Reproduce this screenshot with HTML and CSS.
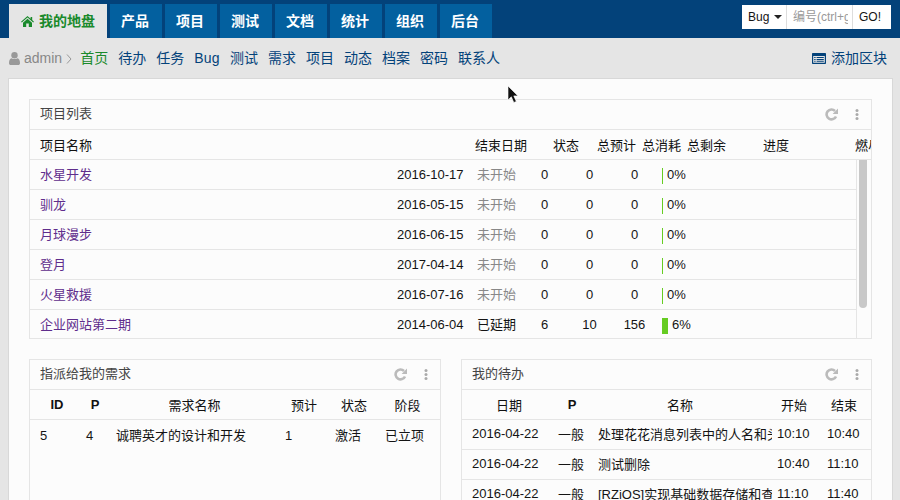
FILE: index.html
```html
<!DOCTYPE html>
<html lang="zh-CN">
	<head>
		<meta charset="utf-8">
		<title>我的地盘</title>
		<link rel="stylesheet" href="styles.css">
	</head>
	<body>

		<!-- top navigation -->
		<header class="topbar">
			<nav class="tabs">
				<a class="tab active">
					<svg class="home-icon" viewBox="0 0 13 11"><path d="M6.5 0 L9.6 2.7 V1 H11.2 V4.1 L13 5.7 L12.2 6.5 L6.5 1.6 L.8 6.5 L0 5.7 Z M2 6.7 L6.5 2.8 L11 6.7 V11 H7.8 V7.6 H5.2 V11 H2 Z"/></svg>
					我的地盘
				</a>
				<a class="tab">产品</a>
				<a class="tab">项目</a>
				<a class="tab">测试</a>
				<a class="tab">文档</a>
				<a class="tab">统计</a>
				<a class="tab">组织</a>
				<a class="tab">后台</a>
			</nav>
			<form class="search">
				<span class="search-type">Bug <i class="caret"></i></span>
				<input class="search-input" type="text" placeholder="编号(ctrl+g)">
				<span class="search-go">GO!</span>
			</form>
		</header>

		<!-- second level menu -->
		<div class="subnav">
			<svg class="user-icon" viewBox="0 0 11 13"><circle cx="5.5" cy="3.2" r="3.2"/><path d="M0 11.2 C0 8.2 1 6.6 2.6 6.2 C4.2 7.4 6.8 7.4 8.4 6.2 C10 6.6 11 8.2 11 11.2 C11 12.4 10.2 13 9.2 13 H1.8 C.8 13 0 12.4 0 11.2 Z"/></svg>
			<span class="user-name">admin</span>
			<svg class="chevron" viewBox="0 0 6 10"><path d="M1 .5 L5 5 L1 9.5" fill="none" stroke="#999" stroke-width="1"/></svg>
			<a class="sub-link current">首页</a>
			<a class="sub-link">待办</a>
			<a class="sub-link">任务</a>
			<a class="sub-link latin">Bug</a>
			<a class="sub-link">测试</a>
			<a class="sub-link">需求</a>
			<a class="sub-link">项目</a>
			<a class="sub-link">动态</a>
			<a class="sub-link">档案</a>
			<a class="sub-link">密码</a>
			<a class="sub-link">联系人</a>
			<a class="add-block">
				<svg class="list-icon" viewBox="0 0 14 11"><path fill-rule="evenodd" d="M1 0 H13 C13.6 0 14 .4 14 1 V10 C14 10.6 13.6 11 13 11 H1 C.4 11 0 10.6 0 10 V1 C0 .4 .4 0 1 0 Z M1.2 3 V9.8 H12.8 V3 Z"/><path d="M2.2 4 H3.6 V5 H2.2 Z M4.6 4 H11.8 V5 H4.6 Z M2.2 5.9 H3.6 V6.9 H2.2 Z M4.6 5.9 H11.8 V6.9 H4.6 Z M2.2 7.8 H3.6 V8.8 H2.2 Z M4.6 7.8 H11.8 V8.8 H4.6 Z"/></svg>
				<span class="add-label">添加区块</span>
			</a>
		</div>

		<main class="panel">

			<!-- project list -->
			<section class="block">
				<div class="block-head">
					<span class="block-title">项目列表</span>
					<svg class="refresh" viewBox="0 0 13 13"><path d="M11 8.400 A4.900 4.900 0 1 1 10 3" fill="none" stroke="#bbb" stroke-width="2.600"/><path d="M13 .6 V6 H7.600 Z"/></svg>
					<svg class="dots" viewBox="0 0 4 11"><circle cx="2" cy="1.500" r="1.500"/><circle cx="2" cy="5.500" r="1.500"/><circle cx="2" cy="9.500" r="1.500"/></svg>
				</div>
				<table class="grid project-head">
					<tr>
						<th class="c-pname">项目名称</th>
						<th class="c-pend">结束日期</th>
						<th class="c-pstat">状态</th>
						<th class="c-pnum">总预计</th>
						<th class="c-pnum">总消耗</th>
						<th class="c-pleft">总剩余</th>
						<th class="c-pprog">进度</th>
						<th class="c-pburn">燃尽图</th>
					</tr>
				</table>
				<div class="project-scroll">
					<table class="grid project-rows">
						<colgroup>
							<col class="w-name"><col class="w-date"><col class="w-stat"><col class="w-num"><col class="w-num"><col class="w-num"><col class="w-prog">
						</colgroup>
						<tr>
							<td class="cjk"><a class="link">水星开发</a></td><td>2016-10-17</td><td class="cjk muted">未开始</td>
							<td class="num">0</td><td class="num">0</td><td class="num">0</td>
							<td class="prog"><i class="bar zero"></i>0%</td>
						</tr>
						<tr>
							<td class="cjk"><a class="link">驯龙</a></td><td>2016-05-15</td><td class="cjk muted">未开始</td>
							<td class="num">0</td><td class="num">0</td><td class="num">0</td>
							<td class="prog"><i class="bar zero"></i>0%</td>
						</tr>
						<tr>
							<td class="cjk"><a class="link">月球漫步</a></td><td>2016-06-15</td><td class="cjk muted">未开始</td>
							<td class="num">0</td><td class="num">0</td><td class="num">0</td>
							<td class="prog"><i class="bar zero"></i>0%</td>
						</tr>
						<tr>
							<td class="cjk"><a class="link">登月</a></td><td>2017-04-14</td><td class="cjk muted">未开始</td>
							<td class="num">0</td><td class="num">0</td><td class="num">0</td>
							<td class="prog"><i class="bar zero"></i>0%</td>
						</tr>
						<tr>
							<td class="cjk"><a class="link">火星救援</a></td><td>2016-07-16</td><td class="cjk muted">未开始</td>
							<td class="num">0</td><td class="num">0</td><td class="num">0</td>
							<td class="prog"><i class="bar zero"></i>0%</td>
						</tr>
						<tr>
							<td class="cjk"><a class="link">企业网站第二期</a></td><td>2014-06-04</td><td class="cjk">已延期</td>
							<td class="num">6</td><td class="num">10</td><td class="num">156</td>
							<td class="prog"><i class="bar six"></i>6%</td>
						</tr>
					</table>
					<div class="track"><div class="thumb"></div></div>
				</div>
			</section>

			<div class="columns">

				<!-- stories -->
				<section class="block tall">
					<div class="block-head">
						<span class="block-title">指派给我的需求</span>
						<svg class="refresh" viewBox="0 0 13 13"><path d="M11 8.400 A4.900 4.900 0 1 1 10 3" fill="none" stroke="#bbb" stroke-width="2.600"/><path d="M13 .6 V6 H7.600 Z"/></svg>
						<svg class="dots" viewBox="0 0 4 11"><circle cx="2" cy="1.500" r="1.500"/><circle cx="2" cy="5.500" r="1.500"/><circle cx="2" cy="9.500" r="1.500"/></svg>
					</div>
					<table class="grid story-table">
						<colgroup>
							<col class="s-id"><col class="s-pri"><col class="s-name"><col class="s-est"><col class="s-stat"><col class="s-stage">
						</colgroup>
						<tr>
							<th class="centered strong">ID</th><th class="centered strong">P</th><th class="centered">需求名称</th>
							<th class="centered">预计</th><th class="centered">状态</th><th class="centered last">阶段</th>
						</tr>
						<tr class="plain">
							<td>5</td><td>4</td><td class="cjk">诚聘英才的设计和开发</td><td>1</td><td class="cjk">激活</td><td class="cjk">已立项</td>
						</tr>
					</table>
				</section>

				<!-- todo -->
				<section class="block tall">
					<div class="block-head">
						<span class="block-title">我的待办</span>
						<svg class="refresh" viewBox="0 0 13 13"><path d="M11 8.400 A4.900 4.900 0 1 1 10 3" fill="none" stroke="#bbb" stroke-width="2.600"/><path d="M13 .6 V6 H7.600 Z"/></svg>
						<svg class="dots" viewBox="0 0 4 11"><circle cx="2" cy="1.500" r="1.500"/><circle cx="2" cy="5.500" r="1.500"/><circle cx="2" cy="9.500" r="1.500"/></svg>
					</div>
					<table class="grid todo-table">
						<colgroup>
							<col class="t-date"><col class="t-pri"><col class="t-name"><col class="t-time"><col class="t-time">
						</colgroup>
						<tr>
							<th class="centered">日期</th><th class="centered strong">P</th><th class="centered last">名称</th>
							<th class="centered end">开始</th><th class="centered end">结束</th>
						</tr>
						<tr>
							<td class="cjk">2016-04-22</td><td class="cjk">一般</td><td class="cjk clip">处理花花消息列表中的人名和头像显示</td><td class="cjk time">10:10</td><td class="cjk time">10:40</td>
						</tr>
						<tr>
							<td class="cjk">2016-04-22</td><td class="cjk">一般</td><td class="cjk clip">测试删除</td><td class="cjk time">10:40</td><td class="cjk time">11:10</td>
						</tr>
						<tr>
							<td class="cjk">2016-04-22</td><td class="cjk">一般</td><td class="cjk clip">[RZiOS]实现基础数据存储和查询接口</td><td class="cjk time">11:10</td><td class="cjk time">11:40</td>
						</tr>
					</table>
				</section>

			</div>
		</main>

		<!-- mouse pointer caught in the capture -->
		<svg class="pointer" viewBox="0 0 14 19"><path d="M1 1 V15 L4.300 11.800 L6.800 17.500 L9.300 16.400 L6.800 10.900 H11 Z" fill="#111" stroke="#fff" stroke-opacity=".6" stroke-width="1"/></svg>

	</body>
</html>
```

FILE: styles.css
```css
/*
	page base
*/

html, body {
	height: 500px;
	overflow: hidden;
}

body {
	margin: 0;
	background-color: #e5e5e5;
	color: #141414;
	font-family: "Liberation Sans", "Noto Sans CJK SC", sans-serif;
	font-size: 13px;
}

/*
	top bar with the main tabs and the search box
*/

.topbar {
	display: flex;
	height: 38px;
	padding-left: 9px;
	box-sizing: border-box;
	background-color: #03427a;
}

.tabs {
	display: flex;
	gap: 3px;
	margin-top: 4px;
}

.tab {
	height: 34px;
	padding: 0 13px 0 11px;
	background-color: #03609f;
	color: #fff;
	font-size: 14px;
	font-weight: bold;
	line-height: 34px;
}

.tab.active {
	display: flex;
	align-items: center;
	gap: 5px;
	padding: 0 12px;
	background-color: #e5e5e5;
	color: #1a8a2c;
}

.home-icon {
	width: 13px;
	height: 11px;
	fill: #1a8a2c;
}

.search {
	display: flex;
	height: 24px;
	margin: 5px 9px 0 auto;
	background-color: #fff;
	line-height: 24px;
}

.search-type {
	width: 44px;
	padding-left: 6px;
	box-sizing: border-box;
	font-size: 12px;
}

.caret {
	display: inline-block;
	margin-left: 1px;
	border-top: 4px solid #222;
	border-left: 4px solid transparent;
	border-right: 4px solid transparent;
	vertical-align: 2px;
}

.search-input {
	width: 67px;
	height: 24px;
	margin: 0;
	padding: 0 4px 0 6px;
	box-sizing: border-box;
	border: 0;
	border-left: 1px solid #ddd;
	border-right: 1px solid #ddd;
	font-family: inherit;
	font-size: 12px;
}

.search-input::placeholder {
	color: #999;
}

.search-go {
	width: 38px;
	padding-left: 6px;
	box-sizing: border-box;
	font-size: 12px;
}

/*
	second level menu
*/

.subnav {
	display: flex;
	align-items: center;
	height: 40px;
	padding: 0 5px 0 9px;
	box-sizing: border-box;
	font-size: 14px;
}

.user-icon {
	width: 11px;
	height: 13px;
	fill: #999;
	margin-right: 4px;
}

.user-name {
	color: #888;
}

.chevron {
	width: 6px;
	height: 10px;
	margin: 1px 3px 0 4px;
}

.sub-link {
	padding: 0 5px 2px;
	color: #03427a;
}

.sub-link.latin {
	padding-bottom: 0;
	letter-spacing: .3px;
}

.sub-link.current {
	color: #1a8a2c;
}

.add-block {
	display: flex;
	align-items: center;
	gap: 5px;
	margin-left: auto;
	padding-right: 8px;
	color: #03427a;
}

.add-label {
	padding-bottom: 2px;
}

.list-icon {
	width: 14px;
	height: 11px;
	fill: #03427a;
}

/*
	the big white panel and the blocks in it
*/

.panel {
	width: 885px;
	margin-left: 8px;
	padding: 20px;
	box-sizing: border-box;
	border: 1px solid #d8d8d8;
	background-color: #fcfcfc;
}

.block {
	overflow: hidden;
	border: 1px solid #e5e5e5;
	background-color: #fcfcfc;
}

.block-head {
	display: flex;
	align-items: center;
	height: 30px;
	padding: 0 12px 0 10px;
	box-sizing: border-box;
	border-bottom: 1px solid #e5e5e5;
}

.block-title {
	margin-right: auto;
	margin-bottom: 4px;
	color: #444;
}

.refresh {
	width: 13px;
	height: 13px;
	fill: #bbb;
}

.dots {
	width: 4px;
	height: 11px;
	margin-left: 17px;
	fill: #aaa;
}

.columns {
	display: grid;
	grid-template-columns: 412px 411px;
	gap: 20px;
	margin-top: 20px;
}

.tall {
	height: 200px;
}

/*
	shared table look
*/

.grid {
	width: 100%;
	table-layout: fixed;
	border-collapse: separate;
	border-spacing: 0;
}

.grid th, .grid td {
	height: 30px;
	box-sizing: border-box;
	white-space: nowrap;
	border-bottom: 1px solid #e5e5e5;
	font-weight: normal;
	text-align: left;
}

.grid th {
	padding: 0 0 0 10px;
	color: #111;
}

.grid td {
	padding: 0 0 0 10px;
}

.grid td.cjk {
	padding-bottom: 2px;
}

.grid td.clip {
	overflow: hidden;
}

.grid th.centered {
	padding: 0 0 0 8px;
	text-align: center;
}

.grid th.strong {
	font-weight: bold;
}

.grid th.last {
	padding: 0;
}

.grid th.end {
	padding: 0 6px 0 0;
}

.plain td {
	border-bottom: 0;
}

/*
	project list columns
*/

.c-pname {
	width: 435px;
}

.c-pend {
	width: 78px;
}

.c-pstat {
	width: 44px;
}

.c-pnum {
	width: 45px;
}

.c-pleft {
	width: 76px;
}

.c-pprog {
	width: 92px;
}

.project-scroll {
	display: flex;
	height: 178px;
	overflow: hidden;
}

.project-rows {
	flex: none;
	width: 827px;
	height: 178px;
	border-right: 1px solid #e5e5e5;
	box-sizing: border-box;
}

.w-name {
	width: 357px;
}

.w-date {
	width: 80px;
}

.w-stat {
	width: 55px;
}

.w-num {
	width: 45px;
}

.grid td.num {
	padding: 0;
	text-align: center;
}

.grid td.prog {
	padding: 2px 0 0 5px;
}

.link {
	color: #5f2d8c;
}

.muted {
	color: #888;
}

.bar {
	display: inline-block;
	height: 16px;
	margin-right: 4px;
	background-color: #66cc22;
	vertical-align: middle;
}

.zero {
	width: 1px;
}

.six {
	width: 6px;
}

.track {
	flex: 1;
	padding-left: 2px;
}

.thumb {
	width: 8px;
	height: 148px;
	border-radius: 0 0 4px 4px;
	background-color: #c8c8c8;
}

/*
	story table columns
*/

.s-id {
	width: 46px;
}

.s-pri {
	width: 30px;
}

.s-name {
	width: 169px;
}

.s-est, .s-stat {
	width: 50px;
}

.s-stage {
	width: 65px;
}

/*
	todo table columns
*/

.t-date {
	width: 86px;
}

.t-pri {
	width: 40px;
}

.t-name {
	width: 184px;
}

.t-time {
	width: 50px;
}

.grid td.time {
	padding-left: 5px;
}

/*
	pointer
*/

.pointer {
	position: absolute;
	left: 507px;
	top: 85px;
	width: 14px;
	height: 19px;
}
```
